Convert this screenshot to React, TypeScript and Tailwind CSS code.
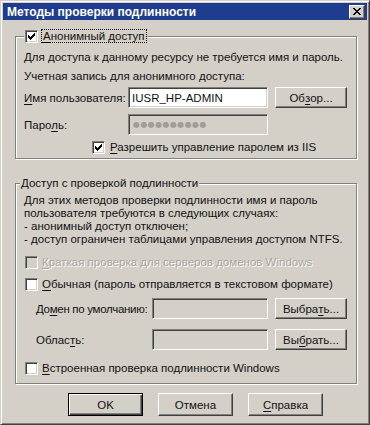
import React from "react";

function Ul({ children }: { children: React.ReactNode }) {
  return <span className="underline decoration-1 underline-offset-[2px]">{children}</span>;
}

function Check({ checked, disabled }: { checked?: boolean; disabled?: boolean }) {
  return (
    <span
      className={`flex h-[13px] w-[13px] shrink-0 items-center justify-center border border-t-[#808080] border-l-[#808080] border-b-white border-r-white shadow-[inset_1px_1px_0_#404040,inset_-1px_-1px_0_#d4d0c8] ${
        disabled ? "bg-[#d4d0c8]" : "bg-white"
      }`}
    >
      {checked && (
        <svg width="7" height="7" viewBox="0 0 7 7" shapeRendering="crispEdges">
          <rect x="0" y="2" width="1" height="3" fill="#000" />
          <rect x="1" y="3" width="1" height="3" fill="#000" />
          <rect x="2" y="4" width="1" height="3" fill="#000" />
          <rect x="3" y="3" width="1" height="3" fill="#000" />
          <rect x="4" y="2" width="1" height="3" fill="#000" />
          <rect x="5" y="1" width="1" height="3" fill="#000" />
          <rect x="6" y="0" width="1" height="3" fill="#000" />
        </svg>
      )}
    </span>
  );
}

function Field({ width, disabled, children }: { width: string; disabled?: boolean; children?: React.ReactNode }) {
  return (
    <div
      className={`flex h-[21px] shrink-0 items-center border border-t-[#808080] border-l-[#808080] border-b-white border-r-white pl-[3px] shadow-[inset_1px_1px_0_#404040,inset_-1px_-1px_0_#d4d0c8] ${width} ${
        disabled ? "bg-[#d4d0c8]" : "bg-white"
      }`}
    >
      {children}
    </div>
  );
}

function Btn({ children, wide, def }: { children: React.ReactNode; wide?: boolean; def?: boolean }) {
  if (def) {
    return (
      <button className="flex h-[23px] w-[75px] items-center justify-center border border-black bg-[#d4d0c8] shadow-[inset_1px_1px_0_#fff,inset_-1px_-1px_0_#404040,inset_-2px_-2px_0_#808080]">
        {children}
      </button>
    );
  }
  return (
    <button
      className={`flex shrink-0 items-center justify-center border border-t-white border-l-white border-b-[#404040] border-r-[#404040] bg-[#d4d0c8] shadow-[inset_-1px_-1px_0_#808080] ${
        wide ? "h-[23px] w-[75px]" : "h-[21px] w-[72px]"
      }`}
    >
      {children}
    </button>
  );
}

const disabledText = "text-[#a8a6a0] [text-shadow:1px_1px_0_#fff]";

export default function App() {
  return (
    <div className="h-[425px] w-[370px] bg-[#d4d0c8] font-['Liberation_Sans',Arial,sans-serif] text-[11.5px] leading-[14px] text-[#111]">
      <div className="flex h-full w-full flex-col border border-t-[#d4d0c8] border-l-[#d4d0c8] border-b-[#404040] border-r-[#404040] p-[2px] shadow-[inset_1px_1px_0_#fff,inset_-1px_-1px_0_#808080]">
        {/* title bar */}
        <div className="flex h-[17px] shrink-0 items-center justify-between bg-[#1f3d8e] pl-[4px] pr-[2px]">
          <span className="text-[12px] font-bold text-white">Методы проверки подлинности</span>
          <span className="flex h-[14px] w-[16px] items-center justify-center border border-t-white border-l-white border-b-[#404040] border-r-[#404040] bg-[#d4d0c8] shadow-[inset_-1px_-1px_0_#808080]">
            <svg width="8" height="7" viewBox="0 0 8 7" shapeRendering="crispEdges">
              <path d="M0 0h2v1h-2zM6 0h2v1h-2zM1 1h2v1h-2zM5 1h2v1h-2zM2 2h4v1h-4zM3 3h2v1h-2zM2 4h4v1h-4zM1 5h2v1h-2zM5 5h2v1h-2zM0 6h2v1h-2zM6 6h2v1h-2z" fill="#000" />
            </svg>
          </span>
        </div>

        {/* anonymous access */}
        <fieldset className="ml-[12px] mt-[9px] w-[342px] border border-[#808080] pb-[4px] pl-[8px] shadow-[1px_1px_0_#fff,inset_1px_1px_0_#fff]">
          <legend className="flex h-[14px] items-center bg-[#d4d0c8] px-[1px]">
            <Check checked />
            <span className="ml-[3px] border border-dotted border-black px-[1px] leading-[12px]">
              <Ul>А</Ul>нонимный доступ
            </span>
          </legend>
          <div className="mt-[7px] whitespace-nowrap">Для доступа к данному ресурсу не требуется имя и пароль.</div>
          <div className="mt-[5px]">Учетная запись для анонимного доступа:</div>
          <div className="mt-[4px] flex h-[21px] items-center">
            <span className="w-[104px] shrink-0 whitespace-nowrap">
              <Ul>И</Ul>мя пользователя:
            </span>
            <Field width="w-[140px]">IUSR_HP-ADMIN</Field>
            <span className="ml-[7px]">
              <Btn>
                Об<Ul>з</Ul>ор...
              </Btn>
            </span>
          </div>
          <div className="mt-[6px] flex h-[21px] items-center">
            <span className="w-[104px] shrink-0">
              Паро<Ul>л</Ul>ь:
            </span>
            <Field width="w-[140px]" disabled>
              <span className="pl-[1px] font-['DejaVu_Sans',sans-serif] text-[8px] tracking-[0.4px] text-[#a09e98]">●●●●●●●●●●</span>
            </Field>
          </div>
          <div className="mt-[5px] flex h-[14px] items-center pl-[68px]">
            <Check checked />
            <span className="ml-[5px] whitespace-nowrap">
              <Ul>Р</Ul>азрешить управление паролем из IIS
            </span>
          </div>
        </fieldset>

        {/* authenticated access */}
        <fieldset className="ml-[12px] mt-[17px] w-[342px] border border-[#808080] pb-[8px] pl-[8px] shadow-[1px_1px_0_#fff,inset_1px_1px_0_#fff]">
          <legend className="ml-[-4px] h-[14px] bg-[#d4d0c8] px-[1px]">Доступ с проверкой подлинности</legend>
          <div className="mt-[4px] whitespace-nowrap leading-[13px]">
            <div>Для этих методов проверки подлинности имя и пароль</div>
            <div>пользователя требуются в следующих случаях:</div>
            <div>- анонимный доступ отключен;</div>
            <div>- доступ ограничен таблицами управления доступом NTFS.</div>
          </div>
          <div className="mt-[9px] flex h-[14px] items-center pl-[1px]">
            <Check disabled />
            <span className={`ml-[4px] whitespace-nowrap ${disabledText}`}>
              <Ul>К</Ul>раткая проверка для серверов доменов Windows
            </span>
          </div>
          <div className="mt-[8px] flex h-[14px] items-center pl-[1px]">
            <Check />
            <span className="ml-[4px] whitespace-nowrap">
              <Ul>О</Ul>бычная (пароль отправляется в текстовом формате)
            </span>
          </div>
          <div className="mt-[7px] flex h-[21px] items-center pl-[12px]">
            <span className="w-[116px] shrink-0 whitespace-nowrap tracking-[-0.3px]">
              До<Ul>м</Ul>ен по умолчанию:
            </span>
            <Field width="w-[116px]" disabled />
            <span className="ml-[7px]">
              <Btn>
                Выбра<Ul>т</Ul>ь...
              </Btn>
            </span>
          </div>
          <div className="mt-[10px] flex h-[21px] items-center pl-[12px]">
            <span className="w-[116px] shrink-0">
              Облас<Ul>т</Ul>ь:
            </span>
            <Field width="w-[116px]" disabled />
            <span className="ml-[7px]">
              <Btn>
                Вы<Ul>б</Ul>рать...
              </Btn>
            </span>
          </div>
          <div className="mt-[11px] flex h-[14px] items-center pl-[1px]">
            <Check />
            <span className="ml-[4px] whitespace-nowrap">
              <Ul>В</Ul>строенная проверка подлинности Windows
            </span>
          </div>
        </fieldset>

        {/* dialog buttons */}
        <div className="ml-[65px] mt-[9px] flex gap-[15px]">
          <Btn def>OK</Btn>
          <Btn wide>Отмена</Btn>
          <Btn wide>
            <Ul>С</Ul>правка
          </Btn>
        </div>
      </div>
    </div>
  );
}
